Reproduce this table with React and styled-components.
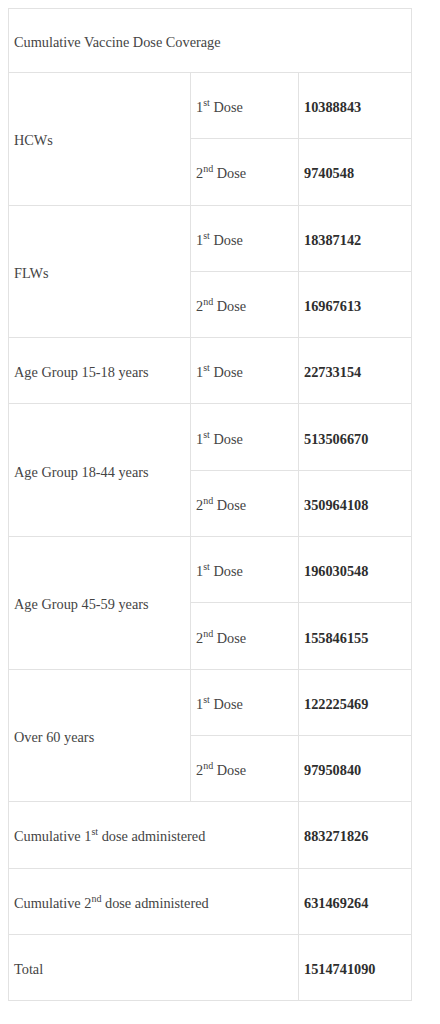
import React from 'react';
import styled, { createGlobalStyle } from 'styled-components';

const GlobalStyle = createGlobalStyle`
  body {
    margin: 0;
    background: #ffffff;
  }
`;

const Page = styled.div`
  padding: 8px 0 0 8px;
  font-family: "Liberation Serif", "Times New Roman", serif;
  font-size: 14.3px;
  color: #3a3a3a;
`;

const Table = styled.table`
  width: 403px;
  border-collapse: collapse;
  table-layout: fixed;
`;

const Row = styled.tr`
  height: ${props => props.$h || 66.3}px;
`;

const Cell = styled.td`
  border: 1px solid #e2e2e2;
  padding: 4px 5px 0;
  vertical-align: middle;
  font-weight: ${props => props.$bold ? 700 : 400};
  color: ${props => props.$bold ? '#2e2e2e' : '#444'};
`;

const Sup = styled.sup`
  font-size: 10px;
  line-height: 0;
`;

const ord = { 1: 'st', 2: 'nd' };

const Dose = ({ n }) => (
  <>{n}<Sup>{ord[n]}</Sup> Dose</>
);

const groups = [
  { name: 'HCWs', doses: [['1', '10388843'], ['2', '9740548']] },
  { name: 'FLWs', doses: [['1', '18387142'], ['2', '16967613']] },
  { name: 'Age Group 15-18 years', doses: [['1', '22733154']] },
  { name: 'Age Group 18-44 years', doses: [['1', '513506670'], ['2', '350964108']] },
  { name: 'Age Group 45-59 years', doses: [['1', '196030548'], ['2', '155846155']] },
  { name: 'Over 60 years', doses: [['1', '122225469'], ['2', '97950840']] },
];

export default function App() {
  return (
    <Page>
      <GlobalStyle />
      <Table>
        <colgroup>
          <col style={{ width: 182 }} />
          <col style={{ width: 108 }} />
          <col style={{ width: 113 }} />
        </colgroup>
        <tbody>
          <Row $h={64}>
            <Cell colSpan={3}>Cumulative Vaccine Dose Coverage</Cell>
          </Row>
          {groups.map(g =>
            g.doses.map(([n, v], i) => (
              <Row key={g.name + n}>
                {i === 0 && <Cell rowSpan={g.doses.length}>{g.name}</Cell>}
                <Cell><Dose n={n} /></Cell>
                <Cell $bold>{v}</Cell>
              </Row>
            ))
          )}
          <Row>
            <Cell colSpan={2}>Cumulative 1<Sup>st</Sup> dose administered</Cell>
            <Cell $bold>883271826</Cell>
          </Row>
          <Row>
            <Cell colSpan={2}>Cumulative 2<Sup>nd</Sup> dose administered</Cell>
            <Cell $bold>631469264</Cell>
          </Row>
          <Row>
            <Cell colSpan={2}>Total</Cell>
            <Cell $bold>1514741090</Cell>
          </Row>
        </tbody>
      </Table>
    </Page>
  );
}
